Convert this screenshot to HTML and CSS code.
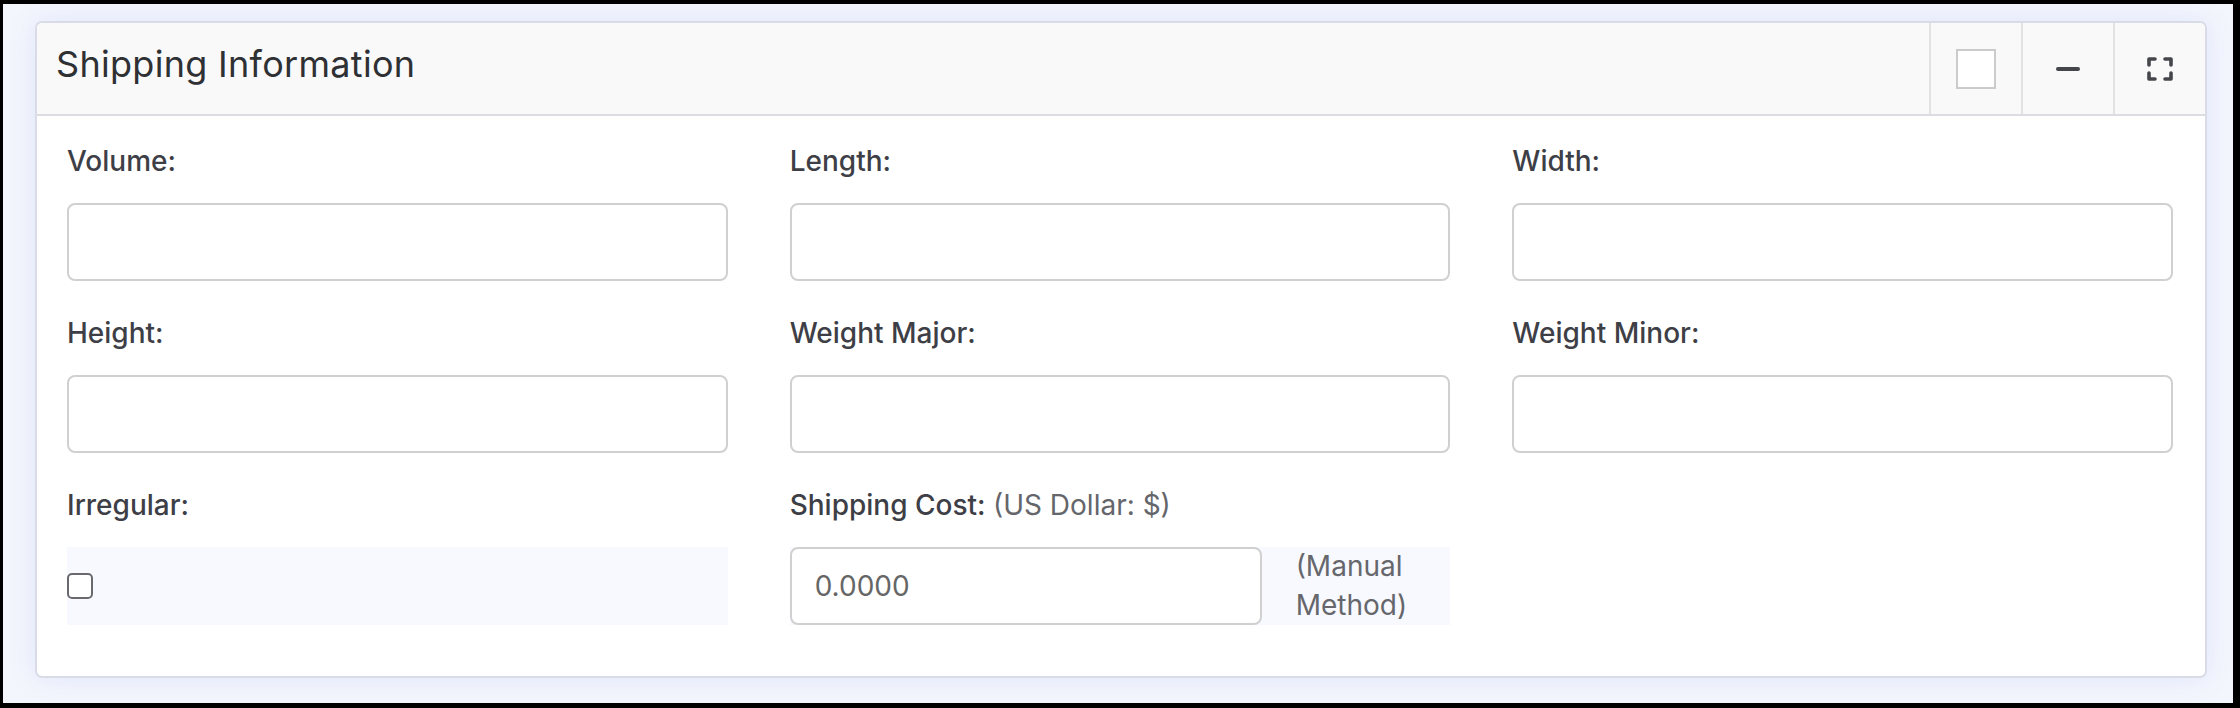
FILE: index.html
```
<!DOCTYPE html>
<html lang="en">
<head>
<meta charset="utf-8">
<title>Shipping Information</title>
<link rel="stylesheet" href="styles.css">
</head>
<body>
<div class="frame">
  <section class="card">
    <header class="card-header">
      <h2 class="card-title">Shipping Information</h2>
      <div class="card-tools">
        <button class="tool" type="button" aria-label="Select"><span class="tool-square"></span></button>
        <button class="tool" type="button" aria-label="Collapse">
          <svg width="26" height="8" viewBox="0 0 26 8"><path d="M3 4 H23" stroke="#45464c" stroke-width="4" stroke-linecap="round" fill="none"/></svg>
        </button>
        <button class="tool" type="button" aria-label="Fullscreen">
          <svg width="28" height="26" viewBox="0 0 28 26" fill="none" stroke="#45464c" stroke-width="3.6" stroke-linecap="round" stroke-linejoin="round">
            <path d="M3 9 V3 H9"/>
            <path d="M19 3 H25 V9"/>
            <path d="M3 17 V23 H9"/>
            <path d="M19 23 H25 V17"/>
          </svg>
        </button>
      </div>
    </header>
    <div class="card-body">
      <div class="field">
        <label class="label">Volume:</label>
        <input class="input" type="text">
      </div>
      <div class="field">
        <label class="label">Length:</label>
        <input class="input" type="text">
      </div>
      <div class="field">
        <label class="label">Width:</label>
        <input class="input" type="text">
      </div>
      <div class="field">
        <label class="label">Height:</label>
        <input class="input" type="text">
      </div>
      <div class="field">
        <label class="label">Weight Major:</label>
        <input class="input" type="text">
      </div>
      <div class="field">
        <label class="label">Weight Minor:</label>
        <input class="input" type="text">
      </div>
      <div class="field">
        <label class="label">Irregular:</label>
        <div class="check-area"><input class="checkbox" type="checkbox"></div>
      </div>
      <div class="field">
        <label class="label">Shipping Cost: <span class="label-note">(US Dollar: $)</span></label>
        <div class="input-group">
          <input class="input input-cost" type="text" value="0.0000">
          <span class="addon">(Manual Method)</span>
        </div>
      </div>
    </div>
  </section>
</div>
</body>
</html>
```
FILE: styles.css
```
* { box-sizing: border-box; }
html, body { margin: 0; padding: 0; }
body {
  background: #000;
  font-family: Inter, "Noto Sans", "Liberation Sans", sans-serif;
  width: 2240px;
  height: 708px;
  overflow: hidden;
}
.frame {
  margin: 4px 7px 0 3px;
  height: 699px;
  background: #f4f6fd;
  padding: 17px 26px 0 32px;
}
.card {
  background: #fff;
  border: 2px solid #d9dce6;
  border-radius: 7px;
  box-shadow: 0 0 28px rgba(95, 115, 235, 0.13);
  overflow: hidden;
}
.card-header {
  display: flex;
  height: 93px;
  background: #f9f9f9;
  border-bottom: 2px solid #dcdde2;
}
.card-title {
  flex: 1;
  margin: 0;
  padding: 20px 0 0 19px;
  font-size: 36px;
  font-weight: 400;
  line-height: 42px;
  color: #2f3034;
  letter-spacing: 0.3px;
}
.card-tools { display: flex; }
.tool {
  width: 92px;
  height: 91px;
  border: 0;
  border-left: 2px solid #e2e2e2;
  background: transparent;
  padding: 0;
  display: flex;
  align-items: center;
  justify-content: center;
}
.tool-square {
  display: block;
  width: 40px;
  height: 40px;
  border: 2px solid #cbcbcb;
  background: #fff;
}
.card-body {
  display: grid;
  grid-template-columns: repeat(3, 1fr);
  column-gap: 62px;
  row-gap: 31px;
  padding: 24px 32px 51px 30px;
}
.field { display: flex; flex-direction: column; }
.label {
  font-size: 28px;
  line-height: 42px;
  font-weight: 500;
  color: #3e3f46;
  margin-bottom: 21px;
  white-space: nowrap;
}
.label-note { font-weight: 400; color: #65666b; }
.input {
  height: 78px;
  width: 100%;
  border: 2px solid #d0d0d0;
  border-radius: 8px;
  background: #fff;
  font-family: inherit;
  font-size: 28px;
  color: #666;
  padding: 0 23px;
  outline: none;
}
.check-area {
  height: 78px;
  background: #f8f9fe;
  display: flex;
  align-items: center;
}
.checkbox {
  appearance: none;
  -webkit-appearance: none;
  margin: 0;
  width: 26px;
  height: 26px;
  border: 2px solid #6a6a6e;
  border-radius: 5px;
  background: #fff;
}
.input-group {
  display: flex;
  height: 78px;
  background: #f8f9fe;
}
.input-cost { flex: 0 0 472px; width: 472px; }
.addon {
  flex: 1;
  padding: 0 10px 0 34px;
  font-size: 28px;
  line-height: 39px;
  color: #66676c;
  display: flex;
  align-items: center;
}
```
